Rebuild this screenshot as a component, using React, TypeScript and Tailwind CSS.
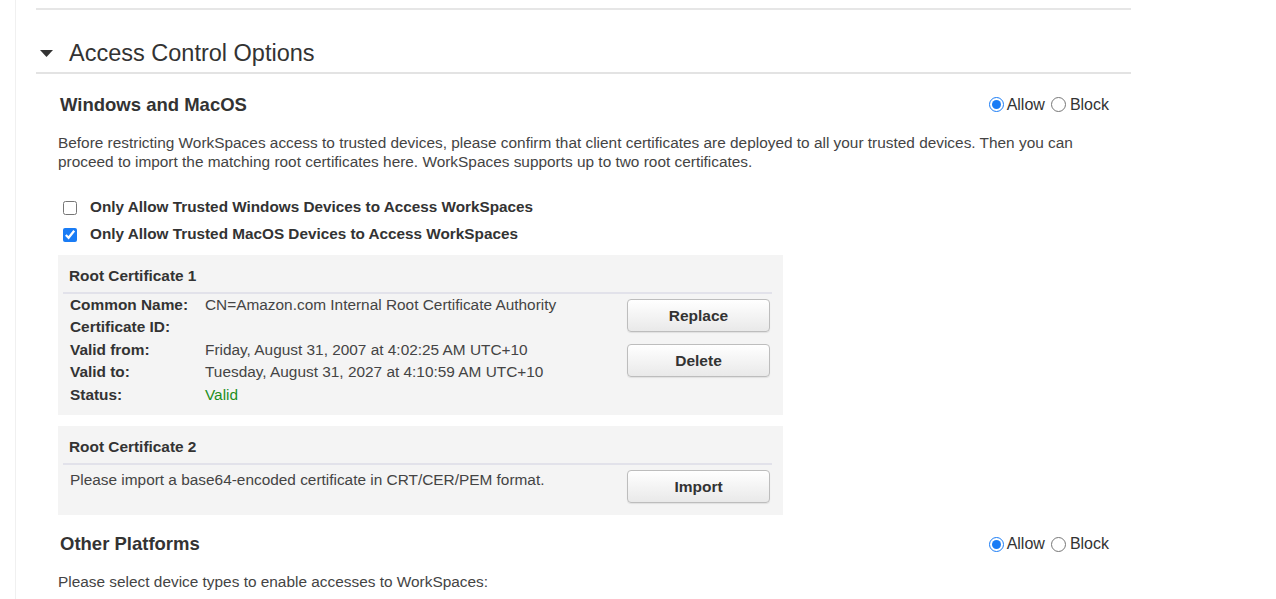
import { useState } from 'react';

const font = { fontFamily: '"Liberation Sans", Arial, Helvetica, sans-serif' };

function AllowBlock({ name }: { name: string }) {
  const [value, setValue] = useState('allow');
  return (
    <div className="flex items-center text-[16px] text-[#333]">
      <input
        type="radio"
        name={name}
        checked={value === 'allow'}
        onChange={() => setValue('allow')}
        className="m-0 h-[15px] w-[15px] accent-[#1a7cf5]"
      />
      <span className="ml-[3px]">Allow</span>
      <input
        type="radio"
        name={name}
        checked={value === 'block'}
        onChange={() => setValue('block')}
        className="m-0 ml-[6px] h-[15px] w-[15px] accent-[#1a7cf5]"
      />
      <span className="ml-[4px]">Block</span>
    </div>
  );
}

function Button({ children }: { children: string }) {
  return (
    <button className="h-[33px] w-[143px] rounded-[4px] border border-[#bdbdbd] bg-gradient-to-b from-[#ffffff] to-[#e9e9e9] text-[15.5px] font-bold text-[#333] shadow-[0_1px_1px_rgba(0,0,0,0.08)]">
      {children}
    </button>
  );
}

const rows = [
  { label: 'Common Name:', value: 'CN=Amazon.com Internal Root Certificate Authority' },
  { label: 'Certificate ID:', value: '' },
  { label: 'Valid from:', value: 'Friday, August 31, 2007 at 4:02:25 AM UTC+10' },
  { label: 'Valid to:', value: 'Tuesday, August 31, 2027 at 4:10:59 AM UTC+10' },
];

export default function App() {
  const [winOnly, setWinOnly] = useState(false);
  const [macOnly, setMacOnly] = useState(true);

  return (
    <div className="flex h-[599px] overflow-hidden bg-white text-[#444]" style={font}>
      <div className="w-[16px] shrink-0 border-r border-[#f0f0f0]" />
      <div className="ml-[19px] w-[1096px] shrink-0 pl-[1px]">
        <div className="mt-[8px] border-t-2 border-[#e6e6e6]" />

        {/* section header */}
        <div className="flex h-[64px] items-end border-b-2 border-[#e3e3e3] pb-[5px]">
          <svg width="13" height="7" viewBox="0 0 13 7" className="mb-[10px] ml-[4px]">
            <path d="M0 0 H13 L6.5 7 Z" fill="#333" />
          </svg>
          <h2 className="ml-[16px] text-[23.5px] leading-[27px] text-[#333]">Access Control Options</h2>
        </div>

        <div className="pl-[22px] pr-[22px]">
          <div className="mt-[17px] flex items-center justify-between">
            <h3 className="ml-[2px] text-[18.5px] font-bold text-[#333]">Windows and MacOS</h3>
            <AllowBlock name="win-mac" />
          </div>

          <p className="mt-[14px] text-[15.4px] leading-[19px] text-[#444]">
            Before restricting WorkSpaces access to trusted devices, please confirm that client certificates are
            deployed to all your trusted devices. Then you can proceed to import the matching root certificates here.
            WorkSpaces supports up to two root certificates.
          </p>

          <div className="mt-[27px] flex flex-col gap-[7px]">
            <label className="flex h-[20px] items-center">
              <input
                type="checkbox"
                checked={winOnly}
                onChange={() => setWinOnly(!winOnly)}
                className="m-0 ml-[5px] h-[14px] w-[14px] accent-[#1a7cf5]"
              />
              <span className="ml-[13px] text-[15.3px] font-bold text-[#333]">
                Only Allow Trusted Windows Devices to Access WorkSpaces
              </span>
            </label>
            <label className="flex h-[20px] items-center">
              <input
                type="checkbox"
                checked={macOnly}
                onChange={() => setMacOnly(!macOnly)}
                className="m-0 ml-[5px] h-[14px] w-[14px] accent-[#1a7cf5]"
              />
              <span className="ml-[13px] text-[15.3px] font-bold text-[#333]">
                Only Allow Trusted MacOS Devices to Access WorkSpaces
              </span>
            </label>
          </div>

          {/* root certificate 1 */}
          <div className="mt-[10px] w-[725px] bg-[#f4f4f4] pb-[9px] pl-[5px] pr-[11px] pt-[11px]">
            <div className="pl-[6px] text-[15.4px] font-bold leading-[20px] text-[#333]">Root Certificate 1</div>
            <div className="mt-[6px] border-t-2 border-[#e2e2ea]" />
            <div className="flex justify-between">
              <div className="pl-[7px] text-[15.4px] leading-[22.5px]">
                {rows.map((r) => (
                  <div key={r.label} className="flex">
                    <span className="w-[135px] font-bold text-[#333]">{r.label}</span>
                    <span className="text-[#444]">{r.value}</span>
                  </div>
                ))}
                <div className="flex">
                  <span className="w-[135px] font-bold text-[#333]">Status:</span>
                  <span className="text-[#1d8f1d]">Valid</span>
                </div>
              </div>
              <div className="mr-[2px] mt-[5px] flex flex-col gap-[12px]">
                <Button>Replace</Button>
                <Button>Delete</Button>
              </div>
            </div>
          </div>

          {/* root certificate 2 */}
          <div className="mt-[11px] w-[725px] bg-[#f4f4f4] pb-[12px] pl-[5px] pr-[11px] pt-[11px]">
            <div className="pl-[6px] text-[15.4px] font-bold leading-[20px] text-[#333]">Root Certificate 2</div>
            <div className="mt-[6px] border-t-2 border-[#e2e2ea]" />
            <div className="flex justify-between">
              <div className="pl-[7px] pt-[4px] text-[15.4px] leading-[22.5px] text-[#444]">
                Please import a base64-encoded certificate in CRT/CER/PEM format.
              </div>
              <div className="mr-[2px] mt-[5px]">
                <Button>Import</Button>
              </div>
            </div>
          </div>

          <div className="mt-[15px] flex items-center justify-between">
            <h3 className="ml-[2px] text-[18.5px] font-bold text-[#333]">Other Platforms</h3>
            <AllowBlock name="other" />
          </div>

          <p className="mt-[14px] text-[15.4px] leading-[19px] text-[#444]">
            Please select device types to enable accesses to WorkSpaces:
          </p>
        </div>
      </div>
    </div>
  );
}
